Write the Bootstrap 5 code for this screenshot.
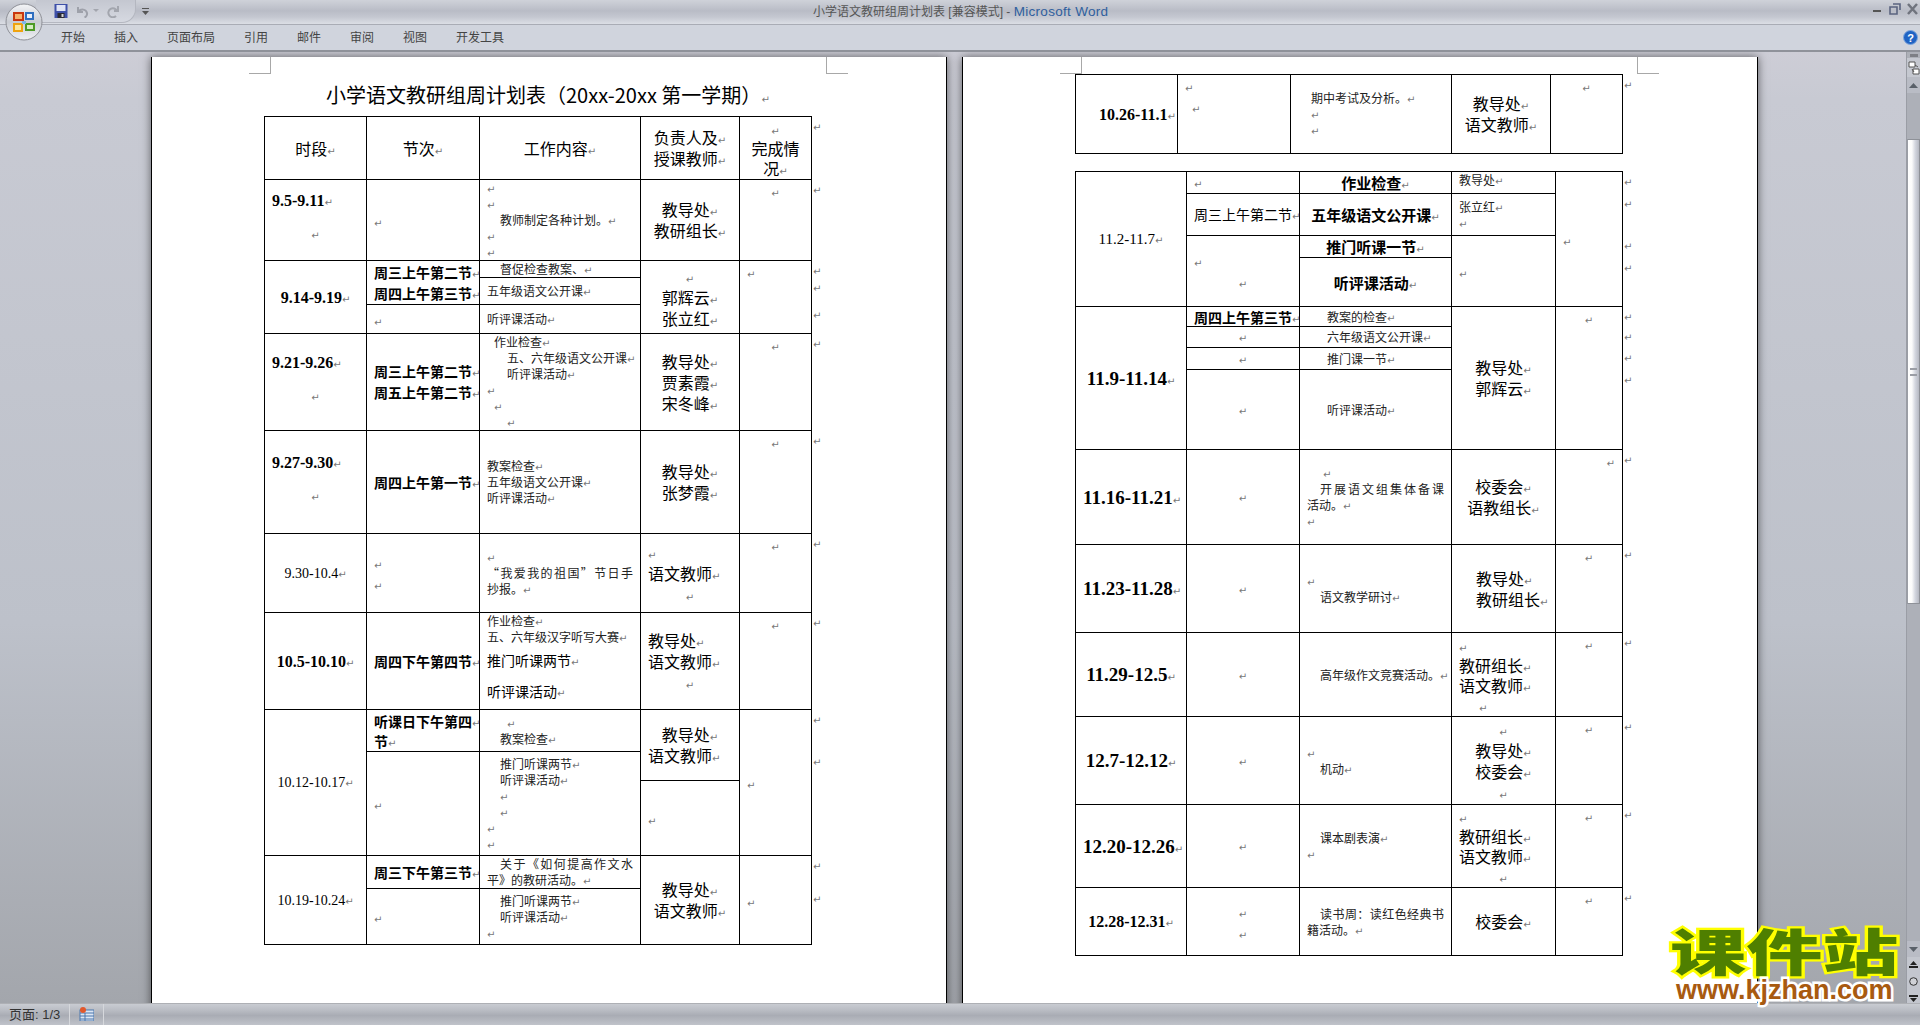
<!DOCTYPE html>
<html lang="zh-CN">
<head>
  <meta charset="UTF-8">
  <meta name="viewport" content="width=device-width, initial-scale=1.0">
  <title>小学语文教研组周计划表 - Microsoft Word</title>
  <link href="https://cdn.jsdelivr.net/npm/bootstrap@5.3.0/dist/css/bootstrap.min.css" rel="stylesheet">
  <style>
    html, body { height: 100%; }
    body {
      margin: 0;
      overflow: hidden;
      position: relative;
      background: #c9cbd3;
      font-family: "Liberation Sans", "Noto Sans CJK SC", sans-serif;
      color: #000;
    }
    /* title bar + ribbon */
    .titlebar {
      height: 24px;
      background: linear-gradient(#cfd2d9, #b9bcc6 45%, #c4c7d0 70%, #dbdee5);
      font-size: 12px;
      line-height: 24px;
      color: #555;
    }
    .titlebar .msw { color: #2f5f9e; font-size: 13.5px; letter-spacing: .3px; }
    .qat {
      margin-left: 36px;
      width: 100px;
      height: 23px;
      border: 1px solid #b4b7c0;
      border-left: 0;
      border-top: 0;
      border-radius: 0 0 14px 0;
      background: linear-gradient(#c4c7d0, #d6d9e1);
      padding-left: 18px;
    }
    .qatmore { margin-left: 6px; }
    .apptitle { position: absolute; left: 813px; top: 0; white-space: nowrap; }
    .winbtns { position: absolute; right: 0; top: 0; }
    .officebtn { position: absolute; left: 5px; top: 3px; z-index: 3; }
    .ribbon {
      height: 28px;
      background: #d0d4dd;
      border-top: 1px solid #a9acb5;
      border-bottom: 2px solid #8f929a;
      padding-left: 61px;
      font-size: 12px;
      line-height: 27px;
      color: #444;
    }
    .rtab { margin-right: 29px; white-space: nowrap; }
    .helpbtn { position: absolute; right: 2px; top: 30px; }
    /* document */
    .docarea {
      height: 951px;
      overflow: hidden;
      padding: 5px 0 0 151px;
      background: linear-gradient(#cdcdd6, #c8cad3 5%, #bdc1ca 60%, #a3a6ac);
      position: relative;
    }
    .wpage {
      position: relative;
      flex: none;
      width: 796px;
      height: 960px;
      padding-left: 112px;
      background: #fff;
      border-left: 1px solid #000;
      border-right: 1px solid #000;
      box-shadow: 0 0 9px rgba(0, 0, 0, .55);
    }
    .wpage.pa { margin-right: 15px; }
    .wpage.pb { padding-top: 17px; }
    .crop { position: absolute; top: 0; width: 22px; height: 17px; border-bottom: 1px solid #a8a8a8; }
    .crop.cl { left: 97px; border-right: 1px solid #a8a8a8; }
    .crop.cr { left: 674px; border-left: 1px solid #a8a8a8; }
    .ttl {
      height: 59px;
      padding: 27px 0 0 62px;
      font-size: 20px;
      line-height: 22px;
      font-family: "Noto Sans CJK SC", sans-serif;
      white-space: nowrap;
    }
    /* word tables */
    .wd {
      table-layout: fixed;
      width: 559px;
      margin-bottom: 0;
      font-family: "Noto Sans CJK SC", sans-serif;
      color: #000;
    }
    .wd.gap { margin-bottom: 17px; }
    .wd td {
      padding: 0 7px;
      border: 1px solid #000;
      white-space: nowrap;
      overflow: visible;
    }
    .wd td.em { border: 0; padding: 6px 0 0 1px; font-size: 9px; line-height: 10px; }
    .wd p { margin: 0; }
    .wd i, .ttl i {
      font: normal 10px/1 "DejaVu Sans", sans-serif;
      color: #777;
    }
    .ls { font-size: 12px; line-height: 16px; color: #222; }
    .lm { font-size: 16px; line-height: 21px; }
    .lb { font-size: 14px; line-height: 21px; font-weight: 700; }
    .lc { font-size: 15px; line-height: 21px; font-weight: 700; }
    .lr { font-size: 14px; line-height: 21px; }
    .lp { font-size: 14px; line-height: 31px; }
    .nb { font: 700 16px/21px "Liberation Serif", serif; }
    .nx { font: 700 19px/21px "Liberation Serif", serif; }
    .nr { font: 400 14px/21px "Liberation Serif", serif; }
    .nq { font: 400 15px/21px "Liberation Serif", serif; }
    .lm.t20, .lb.t20 { line-height: 20px; }
    .lb.t19 { line-height: 18px; }
    .gp12 { margin-bottom: 12px !important; }
    .gp6 { margin-bottom: 6px !important; }
    .i7 { margin-left: 7px !important; }
    .i13 { margin-left: 13px !important; }
    .i14 { margin-left: 16px !important; }
    .i17 { margin-left: 17px !important; }
    .i20 { margin-left: 20px !important; }
    .jl { text-align: justify; text-align-last: justify; }
    /* scrollbar */
    .vbar {
      position: absolute;
      right: 0;
      top: 0;
      bottom: 0;
      width: 14px;
      background: #adb0b8;
      border-left: 1px solid #9a9da5;
      font-size: 0;
    }
    .vdash { height: 3px; width: 8px; margin: 2px auto 1px; background: #7d7f85; }
    .vruler { height: 19px; background: #c5c8d0; padding: 3px 1px 0; }
    .varrow { height: 16px; display: flex; align-items: center; justify-content: center; background: #b9bcc5; }
    .vtrack { height: 46px; }
    .vthumb {
      height: 465px;
      background: linear-gradient(90deg, #fff 0%, #fbfbfb 35%, #d3d6df 65%, #b5b8c2 100%);
      border: 1px solid #8e9198;
      border-left-color: #9a9da5;
      display: flex;
      align-items: center;
      justify-content: center;
    }
    .vgrip { width: 7px; height: 8px; border-top: 2px solid #9a9da5; border-bottom: 2px solid #9a9da5; }
    .vrest { height: 337px; }
    .vpgs { height: 48px; background: #c3c6ce; display: flex; flex-direction: column; align-items: center; justify-content: space-around; }
    /* status bar */
    .statusbar {
      height: 22px;
      background: linear-gradient(#c9ccd2, #b9bcc3 30%, #a9acb4 55%, #c0c3ca);
      border-top: 1px solid #aeb0b5;
      font-size: 13px;
      line-height: 21px;
      color: #333;
    }
    .sbcell { padding: 0 9px; border-right: 1px solid #d6d8dc; height: 100%; }
    .sbcell.ic { padding: 3px 9px 0 9px; line-height: 0; }
    /* watermark */
    .kjz { position: absolute; left: 1672px; top: 921px; z-index: 5; width: 232px; height: 90px; }
    .kjz-cn {
      position: absolute;
      left: -2px;
      top: 3px;
      font: 900 68px/1 "Noto Sans CJK SC", sans-serif;
      color: #4f7f00;
      -webkit-text-stroke: 6px #ff0;
      paint-order: stroke fill;
      transform: scale(1.12, .74);
      transform-origin: 0 0;
      white-space: nowrap;
    }
    .kjz-en {
      position: absolute;
      left: 4px;
      top: 51px;
      font: 700 27px/36px "Liberation Sans", sans-serif;
      color: #a85a10;
      -webkit-text-stroke: 5px #fff;
      paint-order: stroke fill;
      white-space: nowrap;
    }
  </style>
</head>

<body>
  <!-- office button -->
  <svg class="officebtn" width="38" height="38" viewBox="0 0 38 38">
    <defs>
      <linearGradient id="orb" x1="0" y1="0" x2="0" y2="1">
        <stop offset="0" stop-color="#f4f5f7"/><stop offset=".5" stop-color="#c9ccd3"/><stop offset="1" stop-color="#eef0f3"/>
      </linearGradient>
    </defs>
    <circle cx="19" cy="19" r="18" fill="url(#orb)" stroke="#8e9097"/>
    <path d="M9 10h9v7H9z" fill="#f6b26b" stroke="#c8370f" stroke-width="2"/>
    <path d="M21 10h7v6h-7z" fill="#e8f0fb" stroke="#2f6fc0" stroke-width="2"/>
    <path d="M9 21h8v7H9z" fill="#fde79a" stroke="#efa30f" stroke-width="2"/>
    <path d="M21 21h8v6h-8z" fill="#d5ecc1" stroke="#4d9a26" stroke-width="2"/>
    <path d="M17 18h4v3h-4z" fill="#7db7e8"/>
  </svg>

  <!-- title bar -->
  <div class="titlebar d-flex align-items-start position-relative">
    <div class="qat d-flex align-items-center">
      <svg width="14" height="14" viewBox="0 0 13 14">
        <rect width="13" height="14" fill="#3e50a8"/>
        <rect x="2" y="1" width="9" height="6" fill="#dfe4f5"/>
        <rect x="3" y="9" width="7" height="5" fill="#2b2b33"/>
        <rect x="7" y="10" width="2" height="3" fill="#d6d6d6"/>
      </svg>
      <svg class="ms-2" width="13" height="13" viewBox="0 0 13 13"><path d="M2 2v5h5M2.500 6.500C5 3.500 10 4 11 8c.4 2-1 4-2.500 4.500" fill="none" stroke="#9ea1aa" stroke-width="2"/></svg>
      <svg class="ms-1" width="6" height="4" viewBox="0 0 6 4"><path d="M0 0h6L3 3z" fill="#a3a6ae"/></svg>
      <svg class="ms-2" width="13" height="13" viewBox="0 0 13 13"><path d="M11 1v5H7M10 6A4.500 4.500 0 1 0 9 11" fill="none" stroke="#a3a6ae" stroke-width="2"/></svg>
    </div>
    <svg class="qatmore mt-2" width="7" height="7" viewBox="0 0 7 7"><path d="M0 0h7v1H0zM0 3h7L3.500 7z" fill="#555"/></svg>
    <div class="apptitle">小学语文教研组周计划表 [兼容模式] - <span class="msw">Microsoft Word</span></div>
    <svg class="winbtns" width="60" height="20" viewBox="0 0 60 20">
      <path d="M13 10h8v2h-8z" fill="#555"/>
      <path d="M30 7h7v7h-7z M33 4h7v6" fill="none" stroke="#5b6480" stroke-width="1.600"/>
      <path d="M48 4l9 10M57 4l-9 10" stroke="#70747e" stroke-width="2.500"/>
    </svg>
  </div>

  <!-- ribbon tabs -->
  <div class="ribbon d-flex position-relative">
    <span class="rtab">开始</span>
    <span class="rtab">插入</span>
    <span class="rtab">页面布局</span>
    <span class="rtab">引用</span>
    <span class="rtab">邮件</span>
    <span class="rtab">审阅</span>
    <span class="rtab">视图</span>
    <span class="rtab">开发工具</span>
  </div>
  <svg class="helpbtn" width="15" height="15" viewBox="0 0 15 15">
    <circle cx="7.500" cy="7.500" r="7" fill="#1f63c4" stroke="#7fa6dc"/>
    <text x="7.500" y="11.500" text-anchor="middle" font-family="Liberation Sans" font-weight="700" font-size="11" fill="#fff">?</text>
  </svg>

  <div class="docarea d-flex">
    <!-- page 1 -->
    <div class="wpage pa">
      <span class="crop cl"></span>
      <span class="crop cr"></span>
      <div class="ttl">小学语文教研组周计划表（20xx-20xx 第一学期）<i>↵</i></div>
      <table class="table wd">
        <colgroup><col width="102"><col width="113"><col width="161"><col width="99"><col width="72"><col width="12"></colgroup>
        <tr height="63">
          <td class="align-middle text-center lm">时段<i>↵</i></td>
          <td class="align-middle text-center lm">节次<i>↵</i></td>
          <td class="align-middle text-center lm">工作内容<i>↵</i></td>
          <td class="align-middle text-center"><p class="lm">负责人及<i>↵</i></p><p class="lm">授课教师<i>↵</i></p></td>
          <td class="align-middle text-center"><p class="lm t20"><i>↵</i></p><p class="lm t20">完成情</p><p class="lm t20">况<i>↵</i></p></td>
          <td class="em"><i>↵</i></td>
        </tr>
        <tr height="81">
          <td class="align-middle"><p class="nb gp12">9.5-9.11<i>↵</i></p><p class="nb gp6 text-center"><i>↵</i></p></td>
          <td class="align-middle lm"><i>↵</i></td>
          <td><p class="ls"><i>↵</i></p><p class="ls"><i>↵</i></p><p class="ls i13">教师制定各种计划。<i>↵</i></p><p class="ls"><i>↵</i></p><p class="ls"><i>↵</i></p></td>
          <td class="align-middle text-center"><p class="lm">教导处<i>↵</i></p><p class="lm">教研组长<i>↵</i></p></td>
          <td class="text-center lm"><i>↵</i></td>
          <td class="em"><i>↵</i></td>
        </tr>
        <tr height="17">
          <td rowspan="3" class="align-middle text-center nb">9.14-9.19<i>↵</i></td>
          <td rowspan="2" class="align-middle"><p class="lb">周三上午第二节<i>↵</i></p><p class="lb">周四上午第三节<i>↵</i></p></td>
          <td class="ls"><p class="i13">督促检查教案、<i>↵</i></p></td>
          <td rowspan="3" class="align-middle text-center"><p class="lm"><i>↵</i></p><p class="lm">郭辉云<i>↵</i></p><p class="lm">张立红<i>↵</i></p></td>
          <td rowspan="3" class="lm"><i>↵</i></td>
          <td class="em"><i>↵</i></td>
        </tr>
        <tr height="27">
          <td class="align-middle ls">五年级语文公开课<i>↵</i></td>
          <td class="em"><i>↵</i></td>
        </tr>
        <tr height="29">
          <td class="align-middle lm"><i>↵</i></td>
          <td class="align-middle ls">听评课活动<i>↵</i></td>
          <td class="em"><i>↵</i></td>
        </tr>
        <tr height="97">
          <td class="align-middle"><p class="nb gp12">9.21-9.26<i>↵</i></p><p class="nb gp6 text-center"><i>↵</i></p></td>
          <td class="align-middle"><p class="lb">周三上午第二节<i>↵</i></p><p class="lb">周五上午第二节<i>↵</i></p></td>
          <td><p class="ls i7">作业检查<i>↵</i></p><p class="ls i20">五、六年级语文公开课<i>↵</i></p><p class="ls i20">听评课活动<i>↵</i></p><p class="ls"><i>↵</i></p><p class="ls i7"><i>↵</i></p><p class="ls i20"><i>↵</i></p></td>
          <td class="align-middle text-center"><p class="lm">教导处<i>↵</i></p><p class="lm">贾素霞<i>↵</i></p><p class="lm">宋冬峰<i>↵</i></p></td>
          <td class="text-center lm"><i>↵</i></td>
          <td class="em"><i>↵</i></td>
        </tr>
        <tr height="103">
          <td class="align-middle"><p class="nb gp12">9.27-9.30<i>↵</i></p><p class="nb gp6 text-center"><i>↵</i></p></td>
          <td class="align-middle lb">周四上午第一节<i>↵</i></td>
          <td class="align-middle"><p class="ls">教案检查<i>↵</i></p><p class="ls">五年级语文公开课<i>↵</i></p><p class="ls">听评课活动<i>↵</i></p></td>
          <td class="align-middle text-center"><p class="lm">教导处<i>↵</i></p><p class="lm">张梦霞<i>↵</i></p></td>
          <td class="text-center lm"><i>↵</i></td>
          <td class="em"><i>↵</i></td>
        </tr>
        <tr height="79">
          <td class="align-middle text-center nr">9.30-10.4<i>↵</i></td>
          <td class="align-middle"><p class="lm"><i>↵</i></p><p class="lm"><i>↵</i></p></td>
          <td class="align-middle"><p class="ls"><i>↵</i></p><p class="ls jl">“我爱我的祖国”节日手</p><p class="ls">抄报。<i>↵</i></p></td>
          <td class="align-middle"><p class="lm"><i>↵</i></p><p class="lm">语文教师<i>↵</i></p><p class="lm text-center"><i>↵</i></p></td>
          <td class="text-center lm"><i>↵</i></td>
          <td class="em"><i>↵</i></td>
        </tr>
        <tr height="97">
          <td class="align-middle text-center nb">10.5-10.10<i>↵</i></td>
          <td class="align-middle lb">周四下午第四节<i>↵</i></td>
          <td><p class="ls">作业检查<i>↵</i></p><p class="ls">五、六年级汉字听写大赛<i>↵</i></p><p class="lp">推门听课两节<i>↵</i></p><p class="lp">听评课活动<i>↵</i></p></td>
          <td class="align-middle"><p class="lm">教导处<i>↵</i></p><p class="lm">语文教师<i>↵</i></p><p class="lm text-center"><i>↵</i></p></td>
          <td class="text-center lm"><i>↵</i></td>
          <td class="em"><i>↵</i></td>
        </tr>
        <tr height="42">
          <td rowspan="3" class="align-middle text-center nr">10.12-10.17<i>↵</i></td>
          <td class="align-middle"><p class="lb t20">听课日下午第四<i>↵</i></p><p class="lb t20">节<i>↵</i></p></td>
          <td class="align-middle"><p class="ls i20"><i>↵</i></p><p class="ls i13">教案检查<i>↵</i></p></td>
          <td rowspan="2" class="align-middle"><p class="lm text-center">教导处<i>↵</i></p><p class="lm">语文教师<i>↵</i></p></td>
          <td rowspan="3" class="align-middle lm"><i>↵</i></td>
          <td class="em"><i>↵</i></td>
        </tr>
        <tr height="29">
          <td rowspan="2" class="align-middle lm"><i>↵</i></td>
          <td rowspan="2" class="align-middle"><p class="ls i13">推门听课两节<i>↵</i></p><p class="ls i13">听评课活动<i>↵</i></p><p class="ls i13"><i>↵</i></p><p class="ls i13"><i>↵</i></p><p class="ls"><i>↵</i></p><p class="ls"><i>↵</i></p></td>
          <td class="em"><i>↵</i></td>
        </tr>
        <tr height="75">
          <td class="align-middle lm"><i>↵</i></td>
          <td class="em"></td>
        </tr>
        <tr height="33">
          <td rowspan="2" class="align-middle text-center nr">10.19-10.24<i>↵</i></td>
          <td class="align-middle lb">周三下午第三节<i>↵</i></td>
          <td class="align-middle"><p class="ls jl i13">关于《如何提高作文水</p><p class="ls">平》的教研活动。<i>↵</i></p></td>
          <td rowspan="2" class="align-middle text-center"><p class="lm">教导处<i>↵</i></p><p class="lm">语文教师<i>↵</i></p></td>
          <td rowspan="2" class="align-middle lm"><i>↵</i></td>
          <td class="em"><i>↵</i></td>
        </tr>
        <tr height="56">
          <td class="align-middle lm"><i>↵</i></td>
          <td class="align-middle"><p class="ls i13">推门听课两节<i>↵</i></p><p class="ls i13">听评课活动<i>↵</i></p><p class="ls"><i>↵</i></p></td>
          <td class="em"><i>↵</i></td>
        </tr>
      </table>
    </div>

    <!-- page 2 -->
    <div class="wpage pb">
      <span class="crop cl"></span>
      <span class="crop cr"></span>
      <table class="table wd gap">
        <colgroup><col width="102"><col width="113"><col width="161"><col width="99"><col width="72"><col width="12"></colgroup>
        <tr height="79">
          <td class="align-middle text-center"><p class="nb i14">10.26-11.1<i>↵</i></p></td>
          <td><p class="lm"><i>↵</i></p><p class="lm i7"><i>↵</i></p></td>
          <td class="align-middle"><p class="ls i13">期中考试及分析。<i>↵</i></p><p class="ls i13"><i>↵</i></p><p class="ls i13"><i>↵</i></p></td>
          <td class="align-middle text-center"><p class="lm">教导处<i>↵</i></p><p class="lm">语文教师<i>↵</i></p></td>
          <td class="text-center lm"><i>↵</i></td>
          <td class="em"><i>↵</i></td>
        </tr>
      </table>
      <table class="table wd">
        <colgroup><col width="111"><col width="113"><col width="152"><col width="104"><col width="67"><col width="12"></colgroup>
        <tr height="22">
          <td rowspan="4" class="align-middle text-center nq">11.2-11.7<i>↵</i></td>
          <td class="align-middle ls"><i>↵</i></td>
          <td class="align-middle text-center lc">作业检查<i>↵</i></td>
          <td class="ls">教导处<i>↵</i></td>
          <td rowspan="4" class="align-middle lm"><i>↵</i></td>
          <td class="em"><i>↵</i></td>
        </tr>
        <tr height="42">
          <td class="align-middle lr">周三上午第二节<i>↵</i></td>
          <td class="align-middle text-center lc">五年级语文公开课<i>↵</i></td>
          <td class="align-middle"><p class="ls">张立红<i>↵</i></p><p class="ls"><i>↵</i></p></td>
          <td class="em"><i>↵</i></td>
        </tr>
        <tr height="22">
          <td rowspan="2" class="align-middle"><p class="lm"><i>↵</i></p><p class="lm text-center"><i>↵</i></p></td>
          <td class="align-middle text-center lc">推门听课一节<i>↵</i></td>
          <td rowspan="2" class="align-middle lm"><i>↵</i></td>
          <td class="em"><i>↵</i></td>
        </tr>
        <tr height="49">
          <td class="align-middle text-center lc">听评课活动<i>↵</i></td>
          <td class="em"><i>↵</i></td>
        </tr>
        <tr height="20">
          <td rowspan="4" class="align-middle text-center nx">11.9-11.14<i>↵</i></td>
          <td class="align-middle lb t19">周四上午第三节<i>↵</i></td>
          <td class="align-middle ls"><p class="i20">教案的检查<i>↵</i></p></td>
          <td rowspan="4" class="align-middle text-center"><p class="lm">教导处<i>↵</i></p><p class="lm">郭辉云<i>↵</i></p></td>
          <td rowspan="4" class="text-center lm"><i>↵</i></td>
          <td class="em"><i>↵</i></td>
        </tr>
        <tr height="21">
          <td class="align-middle text-center ls"><i>↵</i></td>
          <td class="align-middle ls"><p class="i20">六年级语文公开课<i>↵</i></p></td>
          <td class="em"><i>↵</i></td>
        </tr>
        <tr height="22">
          <td class="align-middle text-center ls"><i>↵</i></td>
          <td class="align-middle ls"><p class="i20">推门课一节<i>↵</i></p></td>
          <td class="em"><i>↵</i></td>
        </tr>
        <tr height="80">
          <td class="align-middle text-center ls"><i>↵</i></td>
          <td class="align-middle ls"><p class="i20">听评课活动<i>↵</i></p></td>
          <td class="em"><i>↵</i></td>
        </tr>
        <tr height="95">
          <td class="align-middle text-center nx">11.16-11.21<i>↵</i></td>
          <td class="align-middle text-center ls"><i>↵</i></td>
          <td class="align-middle"><p class="ls i14"><i>↵</i></p><p class="ls jl i13">开展语文组集体备课</p><p class="ls">活动。<i>↵</i></p><p class="ls"><i>↵</i></p></td>
          <td class="align-middle text-center"><p class="lm">校委会<i>↵</i></p><p class="lm">语教组长<i>↵</i></p></td>
          <td class="text-end lm"><i>↵</i></td>
          <td class="em"><i>↵</i></td>
        </tr>
        <tr height="88">
          <td class="align-middle text-center nx">11.23-11.28<i>↵</i></td>
          <td class="align-middle text-center ls"><i>↵</i></td>
          <td class="align-middle"><p class="ls"><i>↵</i></p><p class="ls i13">语文教学研讨<i>↵</i></p></td>
          <td class="align-middle"><p class="lm i17">教导处<i>↵</i></p><p class="lm i17">教研组长<i>↵</i></p></td>
          <td class="text-center lm"><i>↵</i></td>
          <td class="em"><i>↵</i></td>
        </tr>
        <tr height="84">
          <td class="align-middle text-center nx">11.29-12.5<i>↵</i></td>
          <td class="align-middle text-center ls"><i>↵</i></td>
          <td class="align-middle ls"><p class="i13">高年级作文竞赛活动。<i>↵</i></p></td>
          <td class="align-middle"><p class="lm t20"><i>↵</i></p><p class="lm t20">教研组长<i>↵</i></p><p class="lm t20">语文教师<i>↵</i></p><p class="lm t20 i20"><i>↵</i></p></td>
          <td class="text-center lm"><i>↵</i></td>
          <td class="em"><i>↵</i></td>
        </tr>
        <tr height="88">
          <td class="align-middle text-center nx">12.7-12.12<i>↵</i></td>
          <td class="align-middle text-center ls"><i>↵</i></td>
          <td class="align-middle"><p class="ls"><i>↵</i></p><p class="ls i13">机动<i>↵</i></p></td>
          <td class="align-middle text-center"><p class="lm"><i>↵</i></p><p class="lm">教导处<i>↵</i></p><p class="lm">校委会<i>↵</i></p><p class="lm"><i>↵</i></p></td>
          <td class="text-center lm"><i>↵</i></td>
          <td class="em"><i>↵</i></td>
        </tr>
        <tr height="83">
          <td class="align-middle text-center nx">12.20-12.26<i>↵</i></td>
          <td class="align-middle text-center ls"><i>↵</i></td>
          <td class="align-middle"><p class="ls i13">课本剧表演<i>↵</i></p><p class="ls"><i>↵</i></p></td>
          <td class="align-middle"><p class="lm t20"><i>↵</i></p><p class="lm t20">教研组长<i>↵</i></p><p class="lm t20">语文教师<i>↵</i></p><p class="lm t20 text-center"><i>↵</i></p></td>
          <td class="text-center lm"><i>↵</i></td>
          <td class="em"><i>↵</i></td>
        </tr>
        <tr height="68">
          <td class="align-middle text-center nb">12.28-12.31<i>↵</i></td>
          <td class="align-middle text-center"><p class="lm"><i>↵</i></p><p class="lm"><i>↵</i></p></td>
          <td class="align-middle"><p class="ls jl i13">读书周：读红色经典书</p><p class="ls">籍活动。<i>↵</i></p></td>
          <td class="align-middle text-center lm">校委会<i>↵</i></td>
          <td class="text-center lm"><i>↵</i></td>
          <td class="em"><i>↵</i></td>
        </tr>
      </table>
    </div>

    <!-- scrollbar -->
    <div class="vbar">
      <div class="vdash"></div>
      <div class="vruler">
        <svg width="12" height="15" viewBox="0 0 12 15"><path d="M1 1h6v5H1zM5 8h6v5H5z" fill="#fff" stroke="#555"/><path d="M7 4l3 2M4 8l2 3" stroke="#555"/></svg>
      </div>
      <div class="varrow"><svg width="9" height="5" viewBox="0 0 9 5"><path d="M4.500 0L9 5H0z" fill="#596069"/></svg></div>
      <div class="vtrack"></div>
      <div class="vthumb"><div class="vgrip"></div></div>
      <div class="vrest"></div>
      <div class="varrow"><svg width="9" height="5" viewBox="0 0 9 5"><path d="M0 0h9L4.500 5z" fill="#596069"/></svg></div>
      <div class="vpgs">
        <svg width="9" height="9" viewBox="0 0 9 9"><path d="M4.500 0L8 4H1zM0 5h9v2H0z" fill="#222"/></svg>
        <svg width="9" height="9" viewBox="0 0 9 9"><circle cx="4.500" cy="4.500" r="3.800" fill="#cfd1d6" stroke="#333"/></svg>
        <svg width="9" height="9" viewBox="0 0 9 9"><path d="M0 2h9v2H0zM1 5h7L4.500 9z" fill="#222"/></svg>
      </div>
    </div>
  </div>

  <!-- status bar -->
  <div class="statusbar d-flex">
    <div class="sbcell">页面: 1/3</div>
    <div class="sbcell ic">
      <svg width="15" height="14" viewBox="0 0 15 14">
        <rect x="1" y="3" width="14" height="11" fill="#dce6f4" stroke="#4a77ad"/>
        <path d="M1 6h14M6 6v8M1 9h14M1 12h14" stroke="#4a77ad"/>
        <circle cx="4" cy="3" r="3" fill="#e2582c"/>
      </svg>
    </div>
  </div>

  <!-- site watermark -->
  <div class="kjz">
    <div class="kjz-cn">课件站</div>
    <div class="kjz-en">www.kjzhan.com</div>
  </div>

  <script src="https://cdn.jsdelivr.net/npm/bootstrap@5.3.0/dist/js/bootstrap.bundle.min.js"></script>
</body>
</html>
